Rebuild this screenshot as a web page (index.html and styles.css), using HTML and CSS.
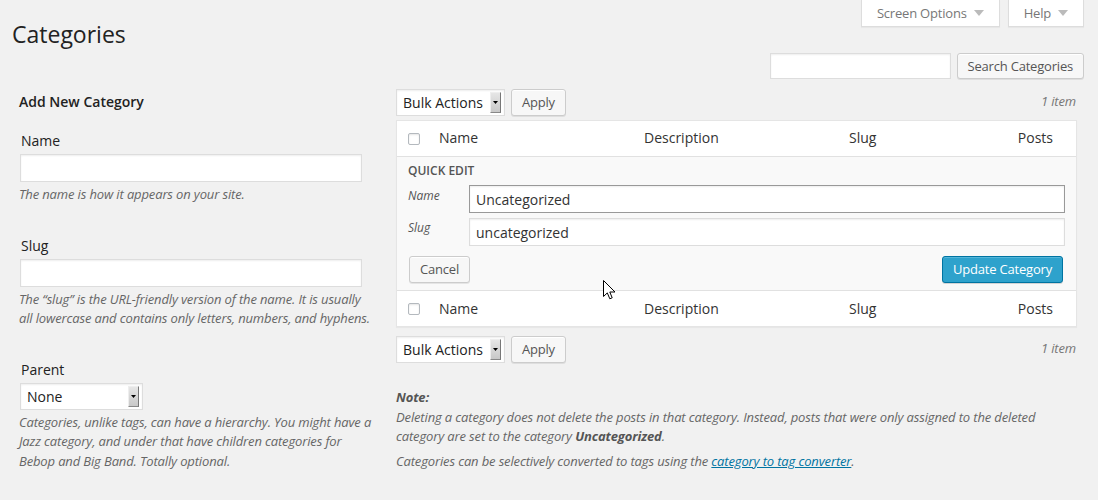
FILE: index.html
```html
<!DOCTYPE html>
<html lang="en">
<head>
<meta charset="utf-8">
<title>Categories</title>
<link rel="stylesheet" href="styles.css">
</head>
<body>
<div class="wrap">
  <div class="top">
    <h1 class="page-title">Categories</h1>
    <div class="meta-links">
      <button class="meta-tab" type="button">Screen Options <svg class="tri" width="10" height="6" viewBox="0 0 10 6"><path d="M0 0h10L5 6z"/></svg></button>
      <button class="meta-tab" type="button">Help <svg class="tri" width="10" height="6" viewBox="0 0 10 6"><path d="M0 0h10L5 6z"/></svg></button>
    </div>
  </div>

  <form class="search-box">
    <input class="input search-input" type="search">
    <button class="btn" type="button">Search Categories</button>
  </form>

  <div class="cols">
    <div class="col-left">
      <h3 class="form-title">Add New Category</h3>
      <div class="form-field">
        <label class="field-label">Name</label>
        <input class="input field-input" type="text">
        <p class="desc">The name is how it appears on your site.</p>
      </div>
      <div class="form-field">
        <label class="field-label">Slug</label>
        <input class="input field-input" type="text">
        <p class="desc">The “slug” is the URL-friendly version of the name. It is usually all lowercase and contains only letters, numbers, and hyphens.</p>
      </div>
      <div class="form-field">
        <label class="field-label">Parent</label>
        <div class="select select-parent"><span class="select-text">None</span><span class="select-arrow"><svg width="5" height="3" viewBox="0 0 5 3"><path d="M0 0h5L2.5 3z"/></svg></span></div>
        <p class="desc">Categories, unlike tags, can have a hierarchy. You might have a Jazz category, and under that have children categories for Bebop and Big Band. Totally optional.</p>
      </div>
    </div>

    <div class="col-right">
      <div class="tablenav tablenav-top">
        <div class="actions">
          <div class="select select-bulk"><span class="select-text">Bulk Actions</span><span class="select-arrow"><svg width="5" height="3" viewBox="0 0 5 3"><path d="M0 0h5L2.5 3z"/></svg></span></div>
          <button class="btn" type="button">Apply</button>
        </div>
        <span class="num">1 item</span>
      </div>

      <table class="cat-table">
        <thead>
          <tr>
            <th class="c-cb"><input class="cb" type="checkbox"></th>
            <th class="c-name">Name</th>
            <th class="c-desc">Description</th>
            <th class="c-slug">Slug</th>
            <th class="c-posts">Posts</th>
          </tr>
        </thead>
        <tbody>
          <tr>
            <td class="qe" colspan="5">
              <div class="qe-title">Quick Edit</div>
              <div class="qe-row">
                <span class="qe-label">Name</span>
                <input class="input qe-input qe-focus" type="text" value="Uncategorized">
              </div>
              <div class="qe-row qe-row-slug">
                <span class="qe-label">Slug</span>
                <input class="input qe-input" type="text" value="uncategorized">
              </div>
              <div class="qe-buttons">
                <button class="btn btn-cancel" type="button">Cancel</button>
                <button class="btn btn-primary" type="button">Update Category</button>
              </div>
            </td>
          </tr>
        </tbody>
        <tfoot>
          <tr>
            <th class="c-cb"><input class="cb" type="checkbox"></th>
            <th class="c-name">Name</th>
            <th class="c-desc">Description</th>
            <th class="c-slug">Slug</th>
            <th class="c-posts">Posts</th>
          </tr>
        </tfoot>
      </table>

      <div class="tablenav tablenav-bottom">
        <div class="actions">
          <div class="select select-bulk"><span class="select-text">Bulk Actions</span><span class="select-arrow"><svg width="5" height="3" viewBox="0 0 5 3"><path d="M0 0h5L2.5 3z"/></svg></span></div>
          <button class="btn" type="button">Apply</button>
        </div>
        <span class="num">1 item</span>
      </div>

      <div class="note">
        <p><strong>Note:</strong><br>Deleting a category does not delete the posts in that category. Instead, posts that were only assigned to the deleted category are set to the category <strong>Uncategorized</strong>.</p>
        <p>Categories can be selectively converted to tags using the <a class="link" href="#">category to tag converter</a>.</p>
      </div>
    </div>
  </div>
</div>

<svg class="cursor" width="13" height="20" viewBox="0 0 13 20"><path d="M0.5 0.5V16.5L4.3 12.9L6.8 18.8L9.2 17.8L6.8 12H12Z" fill="#fff" stroke="#000" stroke-width="1" stroke-linejoin="round"/></svg>
</body>
</html>
```

FILE: styles.css
```css
* { box-sizing: border-box; }

html, body {
  margin: 0;
  padding: 0;
  background: #f1f1f1;
}

body {
  font-family: "Open Sans", "Liberation Sans", sans-serif;
  font-size: 13px;
  color: #444;
  position: relative;
  min-height: 500px;
}

.wrap {
  padding: 0 14px 0 12px;
}

.top {
  display: flex;
  justify-content: space-between;
  align-items: flex-start;
}

.page-title {
  margin: 0;
  padding-top: 20px;
  font-size: 23px;
  font-weight: 400;
  line-height: 29px;
  color: #222;
}

.meta-links {
  display: flex;
  gap: 8px;
}

.meta-tab {
  height: 27px;
  padding: 0 15px;
  border: 1px solid #ddd;
  border-top: none;
  background: #fff;
  box-shadow: 0 1px 1px rgba(0, 0, 0, .04);
  font-family: inherit;
  font-size: 13px;
  letter-spacing: -0.2px;
  line-height: 26px;
  color: #777;
  display: flex;
  align-items: center;
  gap: 6px;
}

.tri { fill: #bbb; margin-left: 1px; }

.search-box {
  display: flex;
  justify-content: flex-end;
  gap: 6px;
  margin: 4px 0 0;
}

.input {
  height: 28px;
  border: 1px solid #ddd;
  background: #fff;
  box-shadow: inset 0 1px 2px rgba(0, 0, 0, .07);
  font-family: inherit;
  font-size: 14px;
  color: #333;
  padding: 0 6px;
  margin: 0;
  outline: none;
}

.search-input {
  width: 181px;
  height: 26px;
}

.btn {
  height: 27px;
  padding: 0 10px;
  border: 1px solid #ccc;
  border-radius: 3px;
  background: #f7f7f7;
  box-shadow: inset 0 1px 0 #fff, 0 1px 0 rgba(0, 0, 0, .08);
  font-family: inherit;
  font-size: 13px;
  letter-spacing: -0.2px;
  line-height: 25px;
  color: #555;
  white-space: nowrap;
  margin: 0;
}

.search-box .btn { height: 26px; }

.btn-primary {
  background: #2ea2cc;
  border-color: #0074a2;
  color: #fff;
  box-shadow: inset 0 1px 0 rgba(120, 200, 230, .5), 0 1px 0 rgba(0, 0, 0, .15);
}

.cols {
  display: flex;
}

.col-left {
  width: 375px;
  flex: none;
  padding: 0 7px;
}

.col-right {
  flex: 1;
  padding: 0 7px 0 9px;
}

.form-title {
  margin: 13px 0 0;
  font-size: 14px;
  font-weight: 600;
  line-height: 20px;
  color: #222;
}

.form-field {
  padding-bottom: 31px;
}

.form-field:first-of-type {
  padding-top: 19px;
}

.field-label {
  display: block;
  font-size: 14px;
  line-height: 20px;
  color: #222;
  margin: 0 0 3px 2px;
}

.field-input {
  width: 342px;
  margin-left: 1px;
}

.desc {
  margin: 3px 0 0;
  padding-right: 4px;
  font-size: 13px;
  font-style: italic;
  letter-spacing: -0.14px;
  line-height: 19.5px;
  color: #666;
}

.select {
  display: flex;
  align-items: center;
  height: 27px;
  border: 1px solid #ddd;
  background: #fff;
  box-shadow: inset 0 1px 2px rgba(0, 0, 0, .07);
  font-size: 14px;
  color: #222;
  padding: 0 3px 0 6px;
}

.select-text { flex: 1; }

.select-arrow {
  width: 11px;
  height: 21px;
  background: linear-gradient(#e6e6e6, #c8c8c8);
  border-right: 1px solid #777;
  border-bottom: 1px solid #888;
  border-top: 1px solid #eee;
  border-left: 1px solid #eee;
  display: flex;
  align-items: center;
  justify-content: center;
}

.select-arrow svg { fill: #000; }

.select-parent {
  width: 123px;
  margin-left: 1px;
}

.select-bulk { width: 109px; }

.tablenav {
  display: flex;
  justify-content: space-between;
  align-items: center;
  height: 27px;
}

.tablenav-top {
  margin: 10px 0 4px;
}

.tablenav-bottom {
  margin-top: 9px;
}

.actions {
  display: flex;
  align-items: center;
  gap: 6px;
}

.num {
  font-size: 13px;
  font-style: italic;
  letter-spacing: -0.14px;
  color: #777;
  padding-right: 1px;
  margin-bottom: 4px;
}

.cat-table {
  width: 100%;
  table-layout: fixed;
  border-collapse: separate;
  border-spacing: 0;
  background: #fff;
  border: 1px solid #e5e5e5;
  box-shadow: 0 1px 1px rgba(0, 0, 0, .04);
}

.cat-table th {
  font-size: 14px;
  font-weight: 400;
  line-height: 19px;
  color: #333;
  text-align: left;
  padding: 7px 10px 9px;
  height: 35px;
  vertical-align: middle;
}

.cat-table thead th { border-bottom: 1px solid #e1e1e1; height: 36px; }
.cat-table tfoot th { border-top: 1px solid #e1e1e1; height: 36px; padding: 8px 10px; }

.cat-table th.c-cb { width: 32px; padding: 0 0 0 11px; }
.c-name { width: 205px; }
.c-desc { width: 205px; }
.c-slug { width: 164px; }
.cat-table th.c-posts { text-align: right; padding-right: 23px; }

.cb {
  appearance: none;
  -webkit-appearance: none;
  display: block;
  width: 12px;
  height: 12px;
  margin: 0;
  border: 1px solid #b4b9be;
  border-radius: 2px;
  background: #fff;
  box-shadow: inset 0 1px 2px rgba(0, 0, 0, .1);
}

.qe {
  background: #f9f9f9;
  padding: 5px 11px 7px 11px;
}

.qe-title {
  font-size: 12px;
  font-weight: 600;
  line-height: 18px;
  text-transform: uppercase;
  color: #555;
}

.qe-row {
  display: flex;
  align-items: flex-start;
  margin-top: 5px;
}

.qe-row-slug { margin-top: 5px; }

.qe-label {
  width: 61px;
  flex: none;
  font-size: 12px;
  font-style: italic;
  line-height: 19px;
  padding-top: 1px;
  color: #555;
}

.qe-row-slug .qe-label { padding-top: 0; }

.qe-input { flex: 1; }

.qe-focus { border-color: #999; }

.qe-buttons {
  display: flex;
  justify-content: space-between;
  margin-top: 10px;
  padding: 0 2px 0 1px;
}

.note {
  margin-top: 25px;
}

.note p {
  margin: 2px 0 5px;
  font-size: 13px;
  font-style: italic;
  letter-spacing: -0.14px;
  line-height: 19.5px;
  color: #666;
}

.note strong { color: #555; }

.link { color: #0074a2; }

.cursor {
  position: absolute;
  left: 603px;
  top: 280px;
}
```
